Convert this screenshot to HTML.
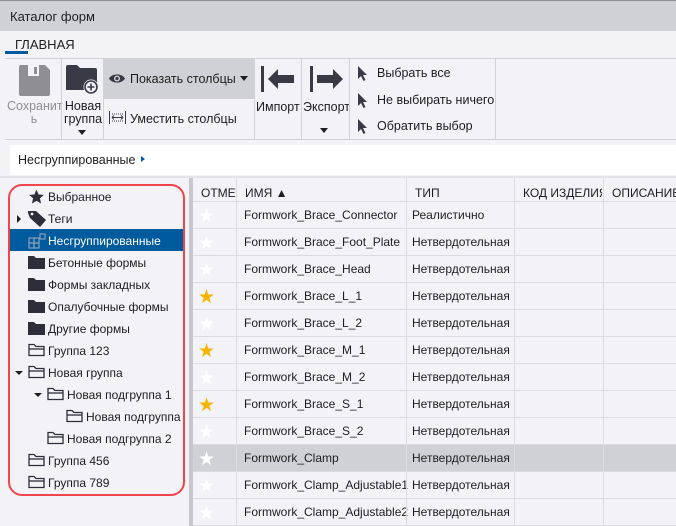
<!DOCTYPE html>
<html><head><meta charset="utf-8"><style>
*{box-sizing:border-box;margin:0;padding:0}
body{width:676px;height:526px;overflow:hidden;background:#f2f2f7;font-family:"Liberation Sans","DejaVu Sans",sans-serif;font-size:12px;color:#1e1e1e;position:relative}
.a{position:absolute;white-space:nowrap}
.sep{position:absolute;width:1px;background:#d2d2d6}
.tr{position:absolute;height:22px;line-height:22px;left:10px;width:174px}
.row{position:absolute;left:193px;width:483px;height:27px;border-bottom:1px solid #dcdce0}
.row span{position:absolute;top:6px}
.hd{position:absolute;top:186px;overflow:hidden;white-space:nowrap}
</style></head><body>
<div class="a" style="left:0;top:0;width:676px;height:31px;background:#d0d1d5;border-top:1px solid #8c8c90"></div>
<div class="a" style="left:10px;top:9px;font-size:13px">Каталог форм</div>
<div class="a" style="left:5px;top:31px;width:671px;height:27px;background:#f3f3f6"></div>
<div class="a" style="left:15px;top:37px;font-size:13px">ГЛАВНАЯ</div>
<div class="a" style="left:5px;top:51px;width:23px;height:3px;background:#005a9e"></div>
<div class="a" style="left:5px;top:58px;width:671px;height:82px;background:#f2f2f7;border-top:1px solid #d2d2d6;border-bottom:1px solid #d2d2d6"></div>
<svg class="a" style="left:18px;top:64px" width="33" height="33" viewBox="0 0 33 33"><path d="M1 3a2 2 0 0 1 2-2h24l5 5v24a2 2 0 0 1-2 2H3a2 2 0 0 1-2-2z" fill="#8e8e93"/><rect x="10" y="1" width="11" height="11" fill="#f2f2f7"/><rect x="16" y="3" width="3" height="7" fill="#8e8e93"/></svg>
<div class="a" style="left:7px;top:100px;color:#8e8e93;text-align:center;width:54px;line-height:13px;font-size:12.5px">Сохранит<br>ь</div>
<div class="sep" style="left:61px;top:59px;height:80px"></div>
<svg class="a" style="left:66px;top:64px" width="33" height="30" viewBox="0 0 33 30"><path d="M0 3a2 2 0 0 1 2-2h9l3 3h15a2 2 0 0 1 2 2v20H0z" fill="#3a3a46"/><circle cx="25" cy="23" r="7.5" fill="#f2f2f7"/><circle cx="25" cy="23" r="6" fill="none" stroke="#3a3a46" stroke-width="1.6"/><path d="M25 19.5v7M21.5 23h7" stroke="#3a3a46" stroke-width="1.6"/></svg>
<div class="a" style="left:62px;top:100px;width:42px;text-align:center;line-height:13px;font-size:12.5px">Новая<br>группа</div>
<div class="a" style="left:78px;top:130px;border:4px solid transparent;border-top:5px solid #1e1e1e"></div>
<div class="sep" style="left:103px;top:59px;height:80px"></div>
<div class="a" style="left:104px;top:59px;width:150px;height:40px;background:#d0d1d6"></div>
<svg class="a" style="left:109px;top:73px" width="16" height="11" viewBox="0 0 16 11"><path d="M0 5.5C3 0 13 0 16 5.5C13 11 3 11 0 5.5z" fill="#3a3a46"/><circle cx="8" cy="5.5" r="3" fill="#d0d1d6"/><circle cx="8" cy="5.5" r="1.6" fill="#3a3a46"/></svg>
<div class="a" style="left:130px;top:72px;font-size:12.5px">Показать столбцы</div>
<div class="a" style="left:240px;top:76px;border:4px solid transparent;border-top:5px solid #1e1e1e"></div>
<svg class="a" style="left:109px;top:111px" width="17" height="13" viewBox="0 0 17 13"><path d="M0.5 0v13M16.5 0v13" stroke="#3a3a46"/><path d="M3 6.5h11M3 6.5l2-2M3 6.5l2 2M14 6.5l-2-2M14 6.5l-2 2" stroke="#3a3a46"/><path d="M3 3h11M3 10h11" stroke="#3a3a46" stroke-dasharray="1 1"/></svg>
<div class="a" style="left:130px;top:112px;font-size:12.5px">Уместить столбцы</div>
<div class="sep" style="left:254px;top:59px;height:80px"></div>
<svg class="a" style="left:261px;top:66px" width="34" height="26" viewBox="0 0 34 26"><rect x="0" y="0" width="3" height="26" fill="#3a3a46"/><path d="M7 13l10-10v6h16v8H17v6z" fill="#3a3a46"/></svg>
<div class="a" style="left:256px;top:100px;font-size:12.5px">Импорт</div>
<div class="sep" style="left:301px;top:59px;height:80px"></div>
<svg class="a" style="left:310px;top:66px" width="34" height="26" viewBox="0 0 34 26"><rect x="0" y="0" width="3" height="26" fill="#3a3a46"/><path d="M33 13L23 3v6H7v8h16v6z" fill="#3a3a46"/></svg>
<div class="a" style="left:303px;top:100px;font-size:12.5px;width:46px;overflow:hidden">Экспорт</div>
<div class="a" style="left:320px;top:128px;border:4px solid transparent;border-top:5px solid #1e1e1e"></div>
<div class="sep" style="left:349px;top:59px;height:80px"></div>
<svg class="a" style="left:358px;top:66px" width="10" height="15" viewBox="0 0 10 15"><path d="M0 0v13l3-3 2.5 5 2-1-2.5-5H9z" fill="#3a3a46"/></svg>
<div class="a" style="left:377px;top:66px;font-size:12.5px">Выбрать все</div>
<svg class="a" style="left:358px;top:93px" width="10" height="15" viewBox="0 0 10 15"><path d="M0 0v13l3-3 2.5 5 2-1-2.5-5H9z" fill="#3a3a46"/></svg>
<div class="a" style="left:377px;top:93px;font-size:12.5px">Не выбирать ничего</div>
<svg class="a" style="left:358px;top:119px" width="10" height="15" viewBox="0 0 10 15"><path d="M0 0v13l3-3 2.5 5 2-1-2.5-5H9z" fill="#3a3a46"/></svg>
<div class="a" style="left:377px;top:119px;font-size:12.5px">Обратить выбор</div>
<div class="sep" style="left:495px;top:59px;height:80px"></div>
<div class="a" style="left:10px;top:145px;width:666px;height:30px;background:#fff"></div>
<div class="a" style="left:18px;top:153px;font-size:12.5px">Несгруппированные</div>
<div class="a" style="left:141px;top:156px;border:3px solid transparent;border-left:4px solid #005a9e;border-right:0"></div>
<div class="a" style="left:189px;top:178px;width:4px;height:348px;background:#c8c8cc"></div>
<div class="a" style="left:0;top:176px;width:676px;height:2px;background:#e4e4e8"></div>
<div class="tr" style="top:229px;background:#005a9e"></div>
<div class="a" style="left:8px;top:184px;width:177px;height:312px;border:2px solid #f0454a;border-radius:14px"></div>
<div id="tree"></div>
<div class="a" style="left:193px;top:178px;width:483px;height:24px;border-bottom:1px solid #dcdce0;background:#f2f2f7"></div>
<div class="hd" style="left:201px;width:35px">ОТМЕТ</div>
<div class="hd" style="left:245px;width:160px">ИМЯ ▲</div>
<div class="hd" style="left:415px;width:90px">ТИП</div>
<div class="hd" style="left:523px;width:79px">КОД ИЗДЕЛИЯ</div>
<div class="hd" style="left:612px;width:64px">ОПИСАНИЕ</div>
<div id="rows"></div>
<div class="a" style="left:236px;top:178px;width:1px;height:348px;background:#dcdce0"></div>
<div class="a" style="left:406px;top:178px;width:1px;height:348px;background:#dcdce0"></div>
<div class="a" style="left:514px;top:178px;width:1px;height:348px;background:#dcdce0"></div>
<div class="a" style="left:603px;top:178px;width:1px;height:348px;background:#dcdce0"></div>
<script>
var rows=[["Formwork_Brace_Connector","Реалистично",0],["Formwork_Brace_Foot_Plate","Нетвердотельная",0],["Formwork_Brace_Head","Нетвердотельная",0],["Formwork_Brace_L_1","Нетвердотельная",1],["Formwork_Brace_L_2","Нетвердотельная",0],["Formwork_Brace_M_1","Нетвердотельная",1],["Formwork_Brace_M_2","Нетвердотельная",0],["Formwork_Brace_S_1","Нетвердотельная",1],["Formwork_Brace_S_2","Нетвердотельная",0],["Formwork_Clamp","Нетвердотельная",0],["Formwork_Clamp_Adjustable1","Нетвердотельная",0],["Formwork_Clamp_Adjustable2","Нетвердотельная",0]];
var h="";rows.forEach(function(r,i){var t=202+i*27;
h+='<div class="row" style="top:'+t+'px;'+(i==9?'background:#d0d1d6':'')+'"><span style="left:5px;top:3px;font-size:19px;color:'+(r[2]?'#f5b400':'#fff')+'">★</span><span style="left:51px">'+r[0]+'</span><span style="left:219px">'+r[1]+'</span></div>';});
document.getElementById("rows").innerHTML=h;
var F='<svg width="17" height="14" viewBox="0 0 17 14"><path d="M0 1h6l2 2h9v11H0z" fill="#2e2e3a"/></svg>';
var O='<svg width="17" height="14" viewBox="0 0 17 14"><path d="M1 1.5h5l2 2h8v9H1z" fill="none" stroke="#2e2e3a" stroke-width="1.3"/><path d="M1 6h15" stroke="#2e2e3a" stroke-width="1.3"/></svg>';
var S='<svg width="17" height="16" viewBox="0 0 24 24"><path d="M12 1l3.2 7.2 7.8.7-5.9 5.2 1.8 7.7L12 17.8 5.1 21.8l1.8-7.7L1 8.9l7.8-.7z" fill="#2e2e3a"/></svg>';
var T='<svg width="18" height="16" viewBox="0 0 18 16"><path d="M0 2V0h8l10 9-6 7L2 7z" fill="#2e2e3a"/><circle cx="4" cy="3" r="1.4" fill="#f2f2f7"/></svg>';
var U='<svg width="18" height="16" viewBox="0 0 18 16"><g fill="none" stroke="#8aa0b8" stroke-width="1.2"><rect x="1" y="5" width="5" height="5"/><rect x="6" y="5" width="5" height="5"/><rect x="1" y="10" width="5" height="5"/><rect x="6" y="10" width="5" height="5"/><rect x="12" y="1" width="5" height="5"/></g></svg>';
var items=[[S,"Выбранное",28,0],[T,"Теги",28,"r"],[U,"Несгруппированные",28,0],[F,"Бетонные формы",28,0],[F,"Формы закладных",28,0],[F,"Опалубочные формы",28,0],[F,"Другие формы",28,0],[O,"Группа 123",28,0],[O,"Новая группа",28,"d"],[O,"Новая подгруппа 1",47,"d"],[O,"Новая подгруппа",66,0],[O,"Новая подгруппа 2",47,0],[O,"Группа 456",28,0],[O,"Группа 789",28,0]];
h="";items.forEach(function(it,i){var t=186+i*22;var c=i==2?'#fff':'#1e1e1e';
if(it[3]=="r")h+='<div class="a" style="left:17px;top:'+(t+7)+'px;border:4px solid transparent;border-left:4px solid #1e1e1e;border-right:0"></div>';
if(it[3]=="d")h+='<div class="a" style="left:'+(it[2]-13)+'px;top:'+(t+9)+'px;border:4px solid transparent;border-top:4px solid #1e1e1e;border-bottom:0"></div>';
h+='<div class="a" style="left:'+it[2]+'px;top:'+(t+3)+'px">'+it[0]+'</div><div class="a" style="left:'+(it[2]+20)+'px;top:'+(t+4)+'px;color:'+c+';width:'+(184-it[2]-20)+'px;overflow:hidden">'+it[1]+'</div>';});
document.getElementById("tree").innerHTML=h;
</script>
</body></html>
